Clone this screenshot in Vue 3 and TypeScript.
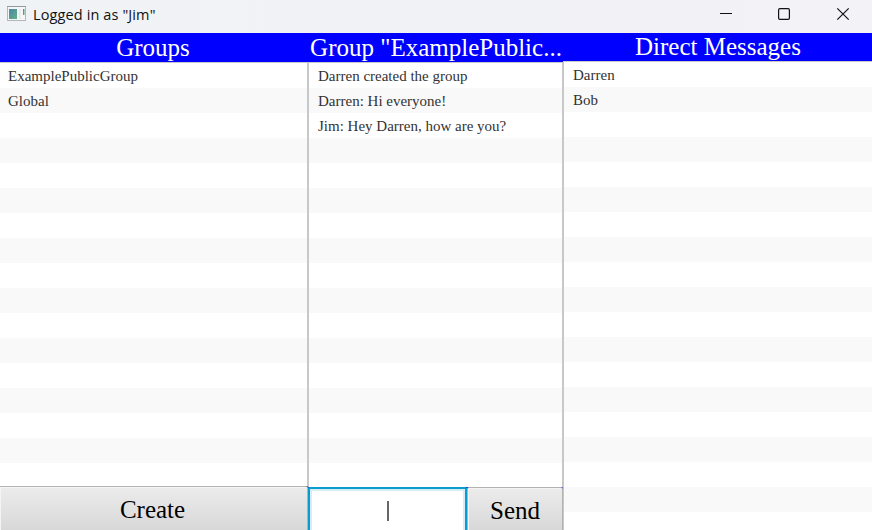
<script setup lang="ts">
const groups: string[] = ['ExamplePublicGroup', 'Global']
const messages: string[] = ['Darren created the group', 'Darren: Hi everyone!', 'Jim: Hey Darren, how are you?']
const contacts: string[] = ['Darren', 'Bob']
const pad = (items: string[], count: number): string[] =>
  Array.from({ length: count }, (_, i) => items[i] ?? '')
</script>

<template>
  <div class="window">
    <header class="titlebar">
      <svg class="app-icon" width="20" height="16" viewBox="0 0 20 16">
        <defs>
          <linearGradient id="pane" x1="0" y1="0" x2="1" y2="1">
            <stop offset="0" stop-color="#4c86a8" />
            <stop offset="1" stop-color="#62b184" />
          </linearGradient>
        </defs>
        <rect x=".5" y=".5" width="18" height="14" fill="#f6f6f6" stroke="#b4b7ba" />
        <path d="M0 .5H19" stroke="#9299a0" />
        <rect x="2" y="3" width="8" height="10" fill="url(#pane)" />
        <rect x="12" y="3" width="2" height="10" fill="#e9ecec" />
        <rect x="16" y="3" width="1.5" height="6" fill="url(#pane)" />
      </svg>
      <span class="title">Logged in as "Jim"</span>
      <div class="controls">
        <svg width="58" height="28" viewBox="0 0 58 28"><path d="M22 13.5H34" stroke="#111" /></svg>
        <svg width="58" height="28" viewBox="0 0 58 28"><rect x="22.6" y="8.6" width="10.8" height="10.8" rx="1.3" fill="none" stroke="#111" stroke-width="1.2" /></svg>
        <svg width="58" height="28" viewBox="0 0 58 28"><path d="M23.3 8.3L34.7 19.7M34.7 8.3L23.3 19.7" stroke="#111" stroke-width="1.2" /></svg>
      </div>
    </header>
    <main class="columns">
      <section class="column left">
        <h2><span>Groups</span></h2>
        <ul class="list">
          <li v-for="(item, i) in pad(groups, 17)" :key="i">{{ item }}</li>
        </ul>
        <div class="actions"><button class="btn"><span class="label">Create</span></button></div>
      </section>
      <section class="column middle">
        <h2><span>Group "ExamplePublic...</span></h2>
        <ul class="list">
          <li v-for="(item, i) in pad(messages, 17)" :key="i">{{ item }}</li>
        </ul>
        <div class="actions">
          <div class="field"><i class="caret"></i></div>
          <button class="btn"><span class="label">Send</span></button>
        </div>
      </section>
      <section class="column right">
        <h2><span>Direct Messages</span></h2>
        <ul class="list">
          <li v-for="(item, i) in pad(contacts, 19)" :key="i">{{ item }}</li>
        </ul>
      </section>
    </main>
  </div>
</template>

<style>
body { margin: 0; overflow: hidden; }
</style>

<style scoped>
.window {
  width: 872px; height: 530px; overflow: hidden; display: flex; flex-direction: column;
  background: #fff; font-family: "Liberation Serif", "Times New Roman", serif;
}
.titlebar {
  height: 33px; flex: none; display: flex; align-items: flex-start; box-sizing: border-box;
  padding-left: 7px; background: linear-gradient(90deg, #f0f3f5, #f3f2f7);
}
.app-icon { margin-top: 6px; flex: none; }
.title {
  margin-left: 6px; padding-top: 5px; line-height: 20px; color: #111; white-space: nowrap;
  font-family: "Open Sans", "Noto Sans", sans-serif; font-size: 14.5px; letter-spacing: .12px;
}
.controls { display: flex; margin-left: auto; }
.columns { flex: 1; min-height: 0; display: grid; grid-template-columns: 308px 255px 309px; }
.column { min-width: 0; min-height: 0; display: flex; flex-direction: column; overflow: hidden; }
h2 {
  margin: 0; height: 29px; flex: none; background: #00f; color: #fff; font-weight: 400;
  font-size: 25px; line-height: 29px; text-align: center; white-space: nowrap;
}
.left h2 { padding-right: 2px; }
.middle h2, .right h2 { padding-left: 1px; }
.right h2 { height: 28px; line-height: 27px; }
.list {
  list-style: none; margin: 0; padding: 0; flex: 1; min-height: 0; overflow: hidden;
  border: 1px solid #c8c8c8; border-bottom: 0; background: #fff;
}
.left .list { border-left: 0; }
.right .list { border-right: 0; }
li {
  height: 25px; box-sizing: border-box; padding-left: 9px; line-height: 27px;
  font-size: 15px; color: #333; white-space: pre;
}
.left li { padding-left: 8px; }
li:nth-child(even) { background: #f9f9f9; }
.actions { flex: none; display: flex; height: 43px; background: #00f; }
.left .actions { height: 44px; }
.btn {
  flex: 1; margin: 0; padding: 0; border: 1px solid #b2b2b2; border-bottom: 0; border-radius: 2px 2px 0 0;
  background: linear-gradient(#ececec, #d8d8d8); box-shadow: inset 1px 1px #f4f4f4;
  color: #000; font-family: inherit; font-size: 25px; line-height: 30px;
}
.left .btn { border-left: 0; border-top-left-radius: 0; padding-right: 2px; }
.label { display: block; padding-top: 3px; }
.field {
  width: 159px; box-sizing: border-box; display: flex; justify-content: center; align-items: center;
  border: 2px solid #0a9dcc; border-bottom: 0; border-radius: 2px 2px 0 0; background: #fff;
  box-shadow: inset 2px 2px #d5edf7, inset -2px 0 #d5edf7;
}
.caret { width: 2px; height: 20px; margin-top: 3px; background: #666; }
</style>
